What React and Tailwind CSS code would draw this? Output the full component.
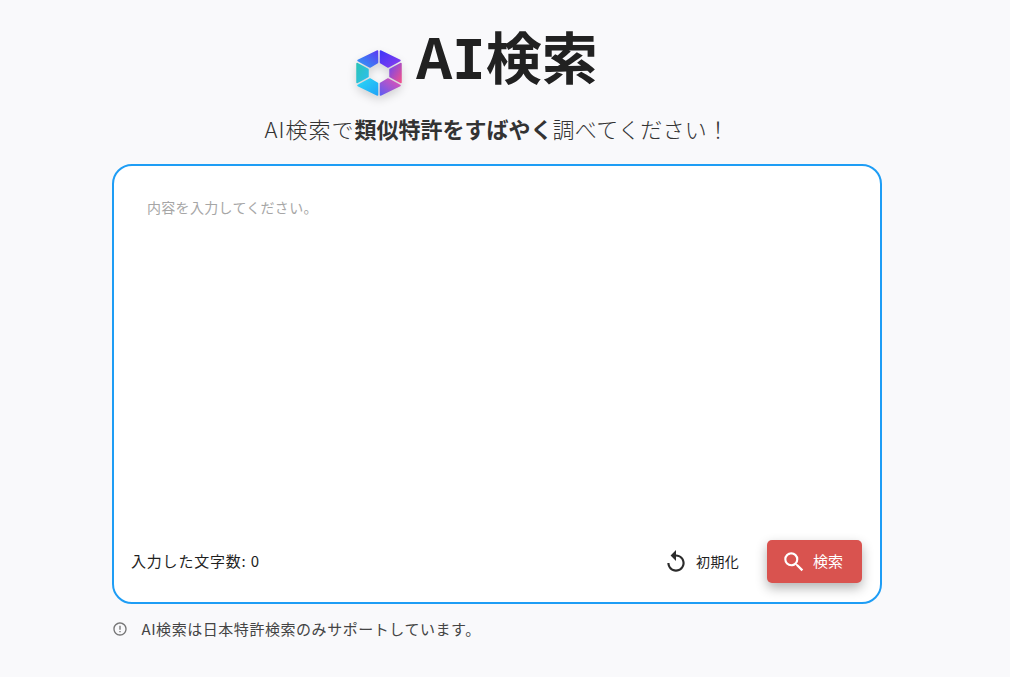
import { MdReplay, MdSearch, MdErrorOutline } from 'react-icons/md';

const segments = [
  { id: 'tl', from: '#2f9cf6', to: '#5a3cf2', x1: 0, y1: 1, x2: 1, y2: 0, points: '-1.5,-22 -1.5,-10.5 -9,-6 -21,-12.5' },
  { id: 'tr', from: '#3f35f8', to: '#8a3cee', x1: 0, y1: 0, x2: 1, y2: 1, points: '1.5,-22 1.5,-10.5 9,-6 21,-12.5' },
  { id: 'r', from: '#6f48f0', to: '#f2508c', x1: 0, y1: 0, x2: 1, y2: 1, points: '22,-9.5 22,9.5 11,3.5 11,-3.5' },
  { id: 'br', from: '#5f5cf2', to: '#ea4fb0', x1: 0, y1: 1, x2: 1, y2: 0, points: '1.5,22 1.5,10.5 9,6 21,12.5' },
  { id: 'bl', from: '#2ad8f5', to: '#22a4f8', x1: 0, y1: 0, x2: 1, y2: 1, points: '-1.5,22 -1.5,10.5 -9,6 -21,12.5' },
  { id: 'l', from: '#2bc4b8', to: '#2dbfee', x1: 0, y1: 0, x2: 1, y2: 1, points: '-22,-9.5 -22,9.5 -11,3.5 -11,-3.5' },
];

const Logo = () => (
  <svg width="54" height="60" viewBox="-27 -30 54 60" className="drop-shadow-[0_4px_4px_rgba(0,0,0,0.16)]">
    <defs>
      {segments.map((s) => (
        <linearGradient key={s.id} id={s.id} x1={s.x1} y1={s.y1} x2={s.x2} y2={s.y2}>
          <stop offset="0" stopColor={s.from} />
          <stop offset="1" stopColor={s.to} />
        </linearGradient>
      ))}
    </defs>
    {segments.map((s) => (
      <polygon
        key={s.id}
        points={s.points}
        fill={`url(#${s.id})`}
        stroke={`url(#${s.id})`}
        strokeWidth="1.5"
        strokeLinejoin="round"
      />
    ))}
  </svg>
);

export default function App() {
  return (
    <div className="min-h-[677px] bg-[#f9f9fb] pr-4 flex flex-col items-center font-['Noto_Sans_CJK_JP','Noto_Sans',sans-serif] overflow-hidden">
      <div className="flex items-center h-[114px] pr-[44px] text-[#212121]">
        <div className="mt-[32px] mr-[10px]"><Logo /></div>
        <h1 className="text-[56px] leading-none font-bold">
          A<span className="font-['DejaVu_Sans_Mono']">I</span>検索
        </h1>
      </div>
      <p className="text-[22px] leading-7 font-light text-[#333333]">
        <span className="tracking-[1px]">AI検索で</span>
        <b className="font-bold">類似特許をすばやく</b>
        <span className="tracking-[0.3px]">調べてください！</span>
      </p>
      <div className="mt-[22px] w-[770px] h-[440px] bg-white border-2 border-[#1e9df5] rounded-[20px] flex flex-col">
        <textarea
          placeholder="内容を入力してください。"
          className="flex-1 resize-none outline-none bg-transparent px-[33px] pt-[31px] text-[14px] leading-5 tracking-[0.3px] placeholder:text-[#a6a6a6]"
        />
        <div className="flex items-center justify-between pl-[17px] pr-[18px] pb-[19px]">
          <span className="text-[15px] tracking-[0.8px] text-[#1f1f1f]">入力した文字数: 0</span>
          <div className="flex items-center gap-7">
            <button className="flex items-center gap-[7px] text-[14px] tracking-[0.3px] text-[#1f1f1f]">
              <MdReplay size={26} className="text-[#2b2b2b]" />
              初期化
            </button>
            <button className="w-[95px] h-[43px] bg-[#d9534f] rounded-[5px] flex items-center justify-center gap-[6px] pr-[5px] text-white text-[15px] shadow-[0_5px_12px_rgba(0,0,0,0.3)]">
              <MdSearch size={26} />
              検索
            </button>
          </div>
        </div>
      </div>
      <div className="w-[770px] mt-[14px] flex items-center gap-[14px] text-[15px] tracking-[0.55px] text-[#444444] -ml-px">
        <MdErrorOutline size={16} className="text-[#757575]" />
        AI検索は日本特許検索のみサポートしています。
      </div>
    </div>
  );
}
